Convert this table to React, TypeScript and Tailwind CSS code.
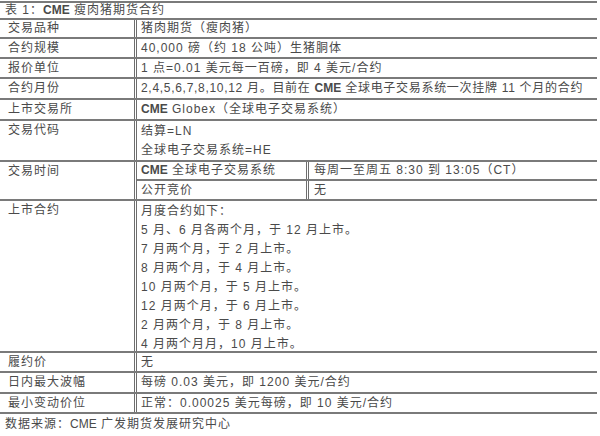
import React from "react";

const line = "border-b-2 border-[#7a7a7a]";
const label = "w-[137px] shrink-0 border-r-[3px] border-double border-[#6e6e6e] pl-[8px]";

function Row({ name, h, children, top }: { name: string; h: string; children: React.ReactNode; top?: boolean }) {
  return (
    <div className={`flex ${line} ${h}`}>
      <div className={`${label} ${top ? "pt-[1px]" : "flex items-center"}`}>{name}</div>
      <div className={`pl-[4px] flex-1 whitespace-nowrap ${top ? "pt-[1px]" : "flex items-center"}`}>{children}</div>
    </div>
  );
}

export default function App() {
  const months = [
    "月度合约如下：",
    "5 月、6 月各两个月，于 12 月上市。",
    "7 月两个月，于 2 月上市。",
    "8 月两个月，于 4 月上市。",
    "10 月两个月，于 5 月上市。",
    "12 月两个月，于 6 月上市。",
    "2 月两个月，于 8 月上市。",
    "4 月两个月月，10 月上市。",
  ];

  return (
    <div className="w-[600px] h-[436px] bg-white text-[12px] leading-[17px] tracking-[1px] text-[#4a4a4a] font-[family-name:'Liberation_Sans','Noto_Sans_CJK_SC',sans-serif]">
      <div className="w-[597px] pt-[1px]">
        <div className={`border-t-2 border-[#7a7a7a] ${line} h-[19px] flex items-center pl-[5px]`}>
          表 1：<span className="font-bold tracking-normal">CME</span>&nbsp;瘦肉猪期货合约
        </div>
        <Row name="交易品种" h="h-[19px]">猪肉期货（瘦肉猪）</Row>
        <Row name="合约规模" h="h-[20px]">40,000 磅（约 18 公吨）生猪胴体</Row>
        <Row name="报价单位" h="h-[20px]">1 点=0.01 美元每一百磅，即 4 美元/合约</Row>
        <Row name="合约月份" h="h-[21px]">
          <span className="tracking-[0.7px]">
            2,4,5,6,7,8,10,12 月。目前在 <span className="font-bold tracking-normal">CME</span> 全球电子交易系统一次挂牌 11 个月的合约
          </span>
        </Row>
        <Row name="上市交易所" h="h-[21px]">
          <span><span className="font-bold tracking-normal">CME</span> Globex（全球电子交易系统）</span>
        </Row>
        <Row name="交易代码" h="h-[41px]" top>
          <div className="leading-[19px]">
            <div>结算=LN</div>
            <div>全球电子交易系统=HE</div>
          </div>
        </Row>
        <div className={`flex ${line} h-[39px]`}>
          <div className={`${label} pt-[1px]`}>交易时间</div>
          <div className="flex-1 flex flex-col">
            <div className={`flex ${line} h-[19px]`}>
              <div className="w-[172px] border-r-[3px] border-double border-[#6e6e6e] pl-[4px] flex items-center">
                <span className="font-bold tracking-normal">CME</span>&nbsp;全球电子交易系统
              </div>
              <div className="pl-[5px] flex items-center">每周一至周五 8:30 到 13:05（CT）</div>
            </div>
            <div className="flex flex-1">
              <div className="w-[172px] border-r-[3px] border-double border-[#6e6e6e] pl-[4px] flex items-center">公开竞价</div>
              <div className="pl-[5px] flex items-center">无</div>
            </div>
          </div>
        </div>
        <Row name="上市合约" h="h-[152px]" top>
          <div className="leading-[19px]">
            {months.map((m) => (
              <div key={m}>{m}</div>
            ))}
          </div>
        </Row>
        <Row name="履约价" h="h-[20px]">无</Row>
        <Row name="日内最大波幅" h="h-[21px]">每磅 0.03 美元，即 1200 美元/合约</Row>
        <Row name="最小变动价位" h="h-[20px]">正常：0.00025 美元每磅，即 10 美元/合约</Row>
        <div className="h-[20px] flex items-center pl-[5px]">
          数据来源：<span className="tracking-normal">CME</span>&nbsp;广发期货发展研究中心
        </div>
      </div>
    </div>
  );
}
